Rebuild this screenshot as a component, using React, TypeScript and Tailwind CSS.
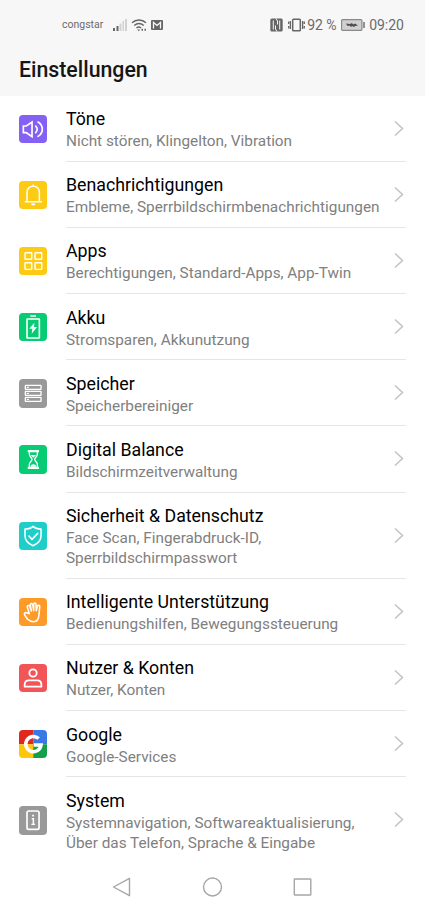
import React from 'react';

const line = {
  fill: 'none',
  stroke: '#fff',
  strokeWidth: 4.6,
  strokeLinecap: 'round' as const,
  strokeLinejoin: 'round' as const,
};

const SoundIcon = () => (
  <g {...line} strokeWidth={5}>
    <path d="M13 33h9l17-12v44L22 53h-9z" strokeLinejoin="miter" />
    <path d="M50 33c6 5 6 15 0 20" />
    <path d="M57 21c17 11 17 32 0 43" />
  </g>
);

const BellIcon = () => (
  <g {...line} strokeWidth={4.6}>
    <path d="M19 62h48" />
    <path d="M24 61V35c0-11 7-19 18.500-19S61 24 61 35v26" />
    <path d="M42.500 12v3" />
    <path d="M39 70h7" />
  </g>
);

const AppsIcon = () => (
  <g {...line} strokeWidth={4.4}>
    <rect x="18" y="17" width="20" height="20" rx="2" />
    <rect x="48" y="17" width="20" height="20" rx="2" />
    <rect x="18" y="47" width="20" height="20" rx="2" />
    <rect x="48" y="47" width="20" height="20" rx="2" />
  </g>
);

const BatteryIcon = () => (
  <g {...line} strokeWidth={4.8}>
    <rect x="24" y="18" width="37" height="57" rx="1" />
    <path d="M34 9h17" strokeLinecap="butt" />
    <path d="M46 29 31 47h9l-2 15 16-20h-9z" fill="#fff" stroke="none" />
  </g>
);

const StorageIcon = () => (
  <g {...line} strokeWidth={4}>
    <rect x="19" y="19" width="47" height="12" rx="1" />
    <rect x="19" y="37" width="47" height="12" rx="1" />
    <rect x="19" y="55" width="47" height="12" rx="1" />
    <path d="M25 25h3M25 43h3M25 61h3" />
  </g>
);

const HourglassIcon = () => (
  <g {...line} strokeWidth={4}>
    <path d="M28 17h30v3H28zM28 67h30v3H28z" />
    <path d="M31 20v8c0 7 8 10 8 15s-8 8-8 15v9M55 20v8c0 7-8 10-8 15s8 8 8 15v9" />
    <path d="M35 30h16l-8 8zM34 65c1-5 5-7 9-7s8 2 9 7z" fill="#fff" stroke="none" />
  </g>
);

const ShieldIcon = () => (
  <g {...line} strokeWidth={4.8}>
    <path d="M42 13c6 6 14 8 24 8v20c0 14-8 23-24 30C26 64 18 55 18 41V21c10 0 18-2 24-8z" />
    <path d="m30 42 9 10 17-18" />
  </g>
);

const HandIcon = () => (
  <g {...line} strokeWidth={4.6}>
    <path d="M31 47 25 28c-2-5 5-8 7-3l5 14-3-18c-1-5 6-6 7-1l3 18V19c0-5 7-5 7 0l1 19 3-13c1-5 8-4 7 1l-2 23c-1 14-4 22-16 22-9 0-14-3-19-8L17 51c-3-4 1-8 5-7z" />
  </g>
);

const UserIcon = () => (
  <g {...line} strokeWidth={5.4}>
    <circle cx="42" cy="27" r="11" />
    <path d="M17 68v-6c0-8 5-13 13-13h24c8 0 13 5 13 13v6z" />
  </g>
);

const GoogleIcon = () => (
  <g>
    <path d="M0 0h42.500v42.500H0z" fill="#e0281f" />
    <path d="M42.500 0H85v42.500H42.500z" fill="#3b78e7" />
    <path d="M0 42.500h42.500V85H0z" fill="#fdc70c" />
    <path d="M42.500 42.500H85V85H42.500z" fill="#14a04a" />
    <path d="M59 25.500A23 23 0 1 0 66 45H44" fill="none" stroke="#fff" strokeWidth="10.500" />
  </g>
);

const SystemIcon = () => (
  <g {...line} strokeWidth={5}>
    <rect x="24" y="15" width="36" height="55" rx="5" />
    <path d="M39.500 29h5.500" strokeLinecap="butt" strokeWidth={5.500} />
    <path d="M38 38h5v16" strokeLinecap="butt" strokeLinejoin="miter" strokeWidth={4.500} />
    <path d="M37 55h11" strokeWidth={3.500} strokeLinecap="butt" />
  </g>
);

const items = [
  { title: 'Töne', sub: ['Nicht stören, Klingelton, Vibration'], bg: 'bg-[#8560f5]', Icon: SoundIcon },
  { title: 'Benachrichtigungen', sub: ['Embleme, Sperrbildschirmbenachrichtigungen'], bg: 'bg-[#fdca14]', Icon: BellIcon },
  { title: 'Apps', sub: ['Berechtigungen, Standard-Apps, App-Twin'], bg: 'bg-[#fdca14]', Icon: AppsIcon },
  { title: 'Akku', sub: ['Stromsparen, Akkunutzung'], bg: 'bg-[#07cc74]', Icon: BatteryIcon },
  { title: 'Speicher', sub: ['Speicherbereiniger'], bg: 'bg-[#999999]', Icon: StorageIcon },
  { title: 'Digital Balance', sub: ['Bildschirmzeitverwaltung'], bg: 'bg-[#07cc74]', Icon: HourglassIcon },
  { title: 'Sicherheit & Datenschutz', sub: ['Face Scan, Fingerabdruck-ID,', 'Sperrbildschirmpasswort'], bg: 'bg-[#1fcdc9]', Icon: ShieldIcon },
  { title: 'Intelligente Unterstützung', sub: ['Bedienungshilfen, Bewegungssteuerung'], bg: 'bg-[#fd9a28]', Icon: HandIcon },
  { title: 'Nutzer & Konten', sub: ['Nutzer, Konten'], bg: 'bg-[#f25558]', Icon: UserIcon },
  { title: 'Google', sub: ['Google-Services'], bg: 'bg-white', Icon: GoogleIcon },
  { title: 'System', sub: ['Systemnavigation, Softwareaktualisierung,', 'Über das Telefon, Sprache & Eingabe'], bg: 'bg-[#999999]', Icon: SystemIcon },
];

const StatusBar = () => (
  <div className="flex h-[49px] items-center justify-between pl-[62px] pr-[21px] text-[#6b6b6b]">
    <div className="flex items-center">
      <span className="w-[51px] pt-px text-[10.500px]">congstar</span>
      <svg className="h-[14px] w-[14px]" viewBox="0 0 14 14">
        <path d="M0 10h2v3H0zM3.500 8h2v5h-2z" fill="#666" />
        <path d="M6.500 5.500h2V13h-2zM9.500 3h1.500v10H9.500zM12 1h2v12h-2z" fill="#d2d2d2" />
      </svg>
      <svg className="ml-1 h-[14px] w-[16px]" viewBox="0 0 16 14" fill="none" stroke="#666" strokeWidth="1.500">
        <path d="M1 4.800C5 1.200 11 1.200 15 4.800M3.200 7.500c3-2.600 6.500-2.600 9.600 0M5.500 10c1.500-1.300 3-1.300 4.500 0" />
        <path d="m6.200 11.500 1.500 1.700 1.500-1.700z" fill="#666" stroke="none" />
        <path d="M10.500 11.800h1.500M13.500 11.800H15" strokeWidth="2" />
      </svg>
      <svg className="ml-1 h-[10px] w-[12px]" viewBox="0 0 12 10">
        <rect width="12" height="10" rx="1" fill="#666" />
        <path d="M2.500 8.500v-6L6 5.500l3.500-3v6" fill="none" stroke="#f7f7f7" strokeWidth="1.300" />
      </svg>
    </div>
    <div className="flex items-center">
      <svg className="h-[14px] w-[13px]" viewBox="0 0 13 14" fill="none">
        <rect x="0.300" y="0.500" width="12.400" height="13" rx="1.500" fill="#666" />
        <path d="M3.300 2.500v9M9.700 2.500v9M6 .5l1.500 2.500v3.500M5.500 7.500V11L7 13.500" stroke="#f7f7f7" strokeWidth="1" />
      </svg>
      <svg className="ml-[5px] h-[14px] w-[17px]" viewBox="0 0 17 14" fill="none" stroke="#666">
        <rect x="4.700" y="1.200" width="7.600" height="11.600" rx="0.800" strokeWidth="1.500" />
        <path d="M2.400 3v8M14.600 3v8M.7 3.500v2.500M.7 8v2.500M16.300 3.500v2.500M16.300 8v2.500" strokeWidth="1.300" />
      </svg>
      <span className="ml-[2px] w-[34px] whitespace-nowrap pt-px text-[14px]">92 %</span>
      <svg className="h-[12px] w-[24px]" viewBox="0 0 24 12">
        <rect x="0.600" y="0.600" width="20.300" height="10.800" rx="1" fill="#d0d0d0" stroke="#8a8a8a" strokeWidth="1.200" />
        <path d="m5 4.500 4 .500 2-1 1 1.500 2-1 3 2-3 .500-1 1-2-1-1 1-1.500-1.500-2 .500z" fill="#4d4d4d" />
        <path d="M23 3v6" stroke="#777" strokeWidth="1.600" />
      </svg>
      <span className="ml-[4px] whitespace-nowrap pt-px text-[14px]">09:20</span>
    </div>
  </div>
);

const NavBar = () => (
  <div className="flex h-[46px] items-center px-[111px]">
    <svg className="h-[20px] w-[203px]" viewBox="0 0 203 20" fill="none" stroke="#a6a6a6" strokeWidth="1.400" strokeLinejoin="round">
      <path d="M18.500 1.300v17.400L2.500 10z" />
      <circle cx="101.500" cy="10" r="9" />
      <rect x="183.300" y="2" width="16.500" height="16" rx="0.500" />
    </svg>
  </div>
);

export default function App() {
  return (
    <div className="flex h-[910px] w-[425px] flex-col overflow-hidden bg-white font-['Roboto',sans-serif]">
      <header className="h-[95.700px] shrink-0 bg-[#f7f7f7]">
        <StatusBar />
        <h1 className="pl-[19px] pt-[6px] text-[21.300px] font-medium leading-[30px] text-[#161616]">Einstellungen</h1>
      </header>

      <main className="flex-1">
        {items.map(({ title, sub, bg, Icon }, i) => (
          <div key={title} className="flex items-stretch pl-[19px] pr-[19px]">
            <div className={`my-auto h-[28.400px] w-[28.400px] shrink-0 overflow-hidden rounded-[4px] ${bg}`}>
              <svg className="block h-full w-full" viewBox="0 0 85 85">
                <Icon />
              </svg>
            </div>
            <div
              className={`ml-[18.600px] flex flex-1 items-center justify-between border-b pb-[9.700px] pt-[11.470px] ${
                i === items.length - 1 ? 'border-transparent' : 'border-[#e6e6e6]'
              }`}
            >
              <div className="whitespace-nowrap">
                <div className="text-[17.750px] leading-[24px] text-black">{title}</div>
                {sub.map((text) => (
                  <div key={text} className="text-[15.330px] leading-[20px] text-[#808080]">{text}</div>
                ))}
              </div>
              <svg className="-mt-[2px] mr-[2px] h-[17px] w-[10px] shrink-0" viewBox="0 0 10 17" fill="none" stroke="#c4c4c4" strokeWidth="1.600">
                <path d="m1 1.500 7.500 7L1 15.500" />
              </svg>
            </div>
          </div>
        ))}
      </main>

      <NavBar />
    </div>
  );
}
